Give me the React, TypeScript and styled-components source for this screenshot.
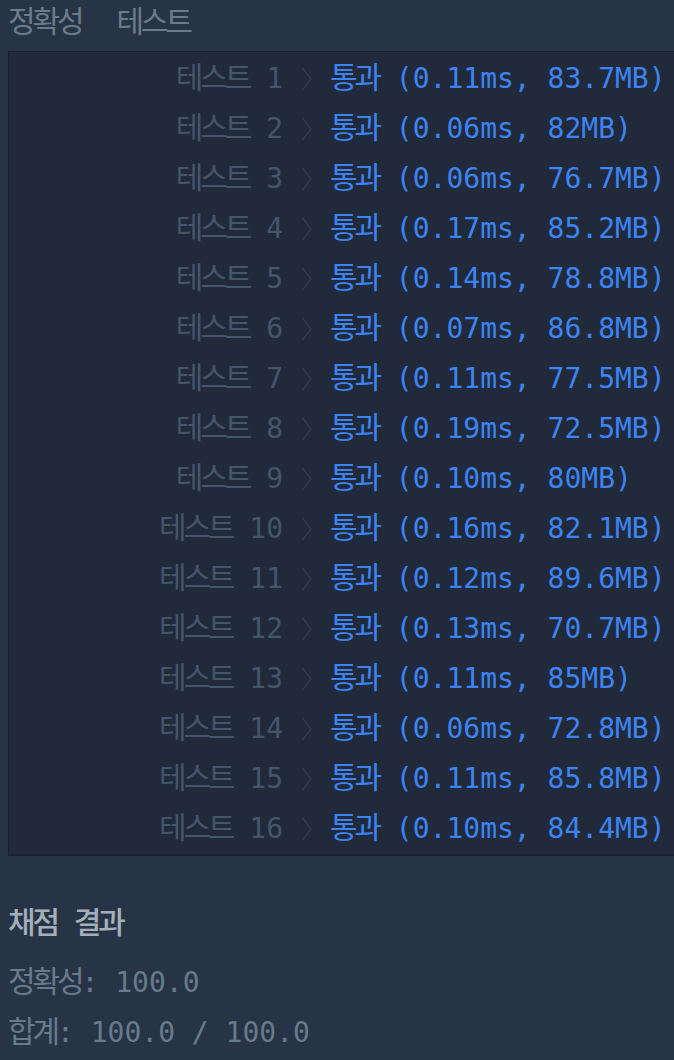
import React from "react";
import styled, { createGlobalStyle } from "styled-components";

const Global = createGlobalStyle`
  html, body {
    margin: 0;
    padding: 0;
    background: #273445;
    overflow: hidden;
  }
  body {
    font-family: "DejaVu Sans Mono", "Noto Sans CJK KR", monospace;
  }
`;

const Page = styled.div`
  padding: 0 0 0 8px;
  font-size: 28px;
  font-family: "DejaVu Sans Mono", "Noto Sans CJK KR", monospace;
`;

const Tabs = styled.div`
  display: flex;
  gap: 35px;
  box-sizing: border-box;
  height: 51px;
  padding-top: 4px;
  color: #6b7b8c;
`;

const Tab = styled.div`
  height: 38px;
  line-height: 38px;
`;

const Ko = styled.span`
  font-family: "Noto Sans CJK KR", sans-serif;
  font-size: 30px;
  letter-spacing: -3.1px;
  line-height: 1;
`;

const Box = styled.div`
  margin-right: -40px;
  padding-top: 2px;
  background: #202a3b;
  border: 1px solid #182130;
  border-bottom-width: 2px;
`;

const Row = styled.div`
  display: grid;
  grid-template-columns: 274px 47px 1fr;
  align-items: center;
  height: 50px;
  line-height: 50px;
  white-space: pre;
`;

const Label = styled.div`
  text-align: right;
  color: #45556a;
`;

const Chevron = styled.svg`
  margin-left: 18px;
  display: block;
`;

const Result = styled.div`
  color: #3d84f2;
`;

const Summary = styled.div`
  padding-top: 43px;
  white-space: pre;
`;

const Title = styled.div`
  color: #a4afba;
  font-weight: 500;
  height: 50px;
  line-height: 50px;
  margin-bottom: 9px;
`;

const Line = styled.div`
  color: #687a8b;
  height: 50px;
  line-height: 50px;
`;

const rows: [number, string][] = [
  [1, "0.11ms, 83.7MB"],
  [2, "0.06ms, 82MB"],
  [3, "0.06ms, 76.7MB"],
  [4, "0.17ms, 85.2MB"],
  [5, "0.14ms, 78.8MB"],
  [6, "0.07ms, 86.8MB"],
  [7, "0.11ms, 77.5MB"],
  [8, "0.19ms, 72.5MB"],
  [9, "0.10ms, 80MB"],
  [10, "0.16ms, 82.1MB"],
  [11, "0.12ms, 89.6MB"],
  [12, "0.13ms, 70.7MB"],
  [13, "0.11ms, 85MB"],
  [14, "0.06ms, 72.8MB"],
  [15, "0.11ms, 85.8MB"],
  [16, "0.10ms, 84.4MB"],
];

export default function App() {
  return (
    <Page>
      <Global />
      <Tabs>
        <Tab>
          <Ko>정확성</Ko>
        </Tab>
        <Tab>
          <Ko>테스트</Ko>
        </Tab>
      </Tabs>
      <Box>
        {rows.map(([n, r]) => (
          <Row key={n}>
            <Label>
              <Ko>테스트</Ko> {n}
            </Label>
            <Chevron width="12" height="24" viewBox="0 0 12 24">
              <polyline
                points="1.5,1 10,12 1.5,23"
                fill="none"
                stroke="#2e3b4e"
                strokeWidth="1.5"
              />
            </Chevron>
            <Result>
              <Ko>통과</Ko> ({r})
            </Result>
          </Row>
        ))}
      </Box>
      <Summary>
        <Title>
          <Ko>채점</Ko> <Ko>결과</Ko>
        </Title>
        <Line>
          <Ko>정확성</Ko>: 100.0
        </Line>
        <Line>
          <Ko>합계</Ko>: 100.0 / 100.0
        </Line>
      </Summary>
    </Page>
  );
}
